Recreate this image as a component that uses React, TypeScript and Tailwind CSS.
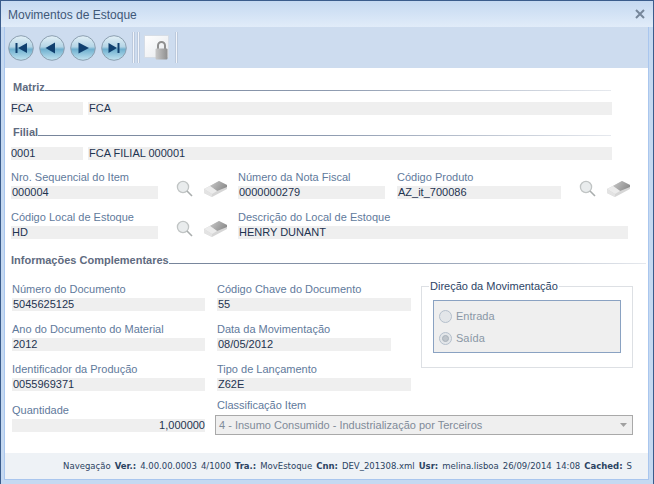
import type { ReactNode } from 'react'

function NavButton({ dir }: { dir: 'first' | 'prev' | 'next' | 'last' }) {
  const arrow = {
    first: 'M19 8 V18 L10 13 Z',
    prev: 'M16 7.5 V18.5 L6.5 13 Z',
    next: 'M8.5 7.5 V18.5 L19 13 Z',
    last: 'M7.5 8 V18 L16 13 Z',
  }[dir]
  return (
    <svg width="26" height="26" viewBox="0 0 26 26" className="shrink-0">
      <defs>
        <linearGradient id={`nav-${dir}`} x1="0" y1="0" x2="0" y2="1">
          <stop offset="0" stopColor="#e4f0f7" />
          <stop offset="0.45" stopColor="#b4d5e6" />
          <stop offset="0.55" stopColor="#6fb0cf" />
          <stop offset="1" stopColor="#c3e4f1" />
        </linearGradient>
      </defs>
      <circle cx="13" cy="13" r="12.3" fill={`url(#nav-${dir})`} stroke="#8c9fb0" strokeWidth="1" />
      <path d={arrow} fill="#10406f" />
      {dir === 'first' && <rect x="7.5" y="8" width="2" height="10" fill="#10406f" />}
      {dir === 'last' && <rect x="16.5" y="8" width="2" height="10" fill="#10406f" />}
    </svg>
  )
}

function Separator() {
  return <div className="w-[3px] h-[31px] bg-[#f2f5fa] border-x border-[#bccadd] shrink-0" />
}

function LockIcon() {
  return (
    <svg width="26" height="26" viewBox="0 0 26 26" className="shrink-0">
      <defs>
        <linearGradient id="lock-back" x1="0" y1="0" x2="1" y2="1">
          <stop offset="0" stopColor="#ffffff" />
          <stop offset="1" stopColor="#e6e9ed" />
        </linearGradient>
        <linearGradient id="lock-body" x1="0" y1="0" x2="1" y2="0">
          <stop offset="0" stopColor="#c9c9c9" />
          <stop offset="1" stopColor="#8f8f8f" />
        </linearGradient>
      </defs>
      <rect x="0.5" y="0.5" width="24" height="22" fill="url(#lock-back)" stroke="#d6dde6" />
      <path d="M14 14 V10.5 a3.5 3.5 0 0 1 7 0 V14" fill="none" stroke="#8f8f8f" strokeWidth="2" />
      <rect x="11.5" y="13.5" width="12" height="11" rx="1" fill="url(#lock-body)" />
    </svg>
  )
}

function SearchIcon() {
  return (
    <svg width="18" height="18" viewBox="0 0 18 18" className="shrink-0">
      <circle cx="7" cy="7" r="5.6" fill="#e9eced" stroke="#c0c4c4" strokeWidth="1.3" />
      <path d="M11 11 L16 16" stroke="#a9adad" strokeWidth="1.6" />
    </svg>
  )
}

function EraserIcon({ id }: { id: string }) {
  return (
    <svg width="25" height="18" viewBox="0 0 25 18" className="shrink-0">
      <defs>
        <linearGradient id={id} x1="0" y1="0" x2="1" y2="0.4">
          <stop offset="0" stopColor="#c9c9c9" />
          <stop offset="1" stopColor="#8f8f8f" />
        </linearGradient>
      </defs>
      <path d="M1 9 L16 1 L24 5 L24 9 L9 17 L1 13 Z" fill="#d6d6d6" />
      <path d="M7 6 L16 1 L24 5 L24 7 L14 11 Z" fill={`url(#${id})`} />
      <path d="M1 9 L7 6 L14 11 L9 14 Z" fill="#ececec" />
      <path d="M1 9 L9 14 L9 17 L1 13 Z" fill="#e3e3e3" />
    </svg>
  )
}

function Heading({ children }: { children: ReactNode }) {
  return (
    <div className="flex items-end h-[14px]">
      <span className="font-bold text-[#5f6b80] leading-[14px] shrink-0">{children}</span>
      <div className="flex-1 h-px mb-[3px] bg-gradient-to-r from-[#76849a] via-[#8e9bb0] to-[#e6e9ee]" />
    </div>
  )
}

function Bar({ w, right, flush, children }: { w: string; right?: boolean; flush?: boolean; children: ReactNode }) {
  return (
    <div className={`${w} h-[13px] bg-[#efefef] leading-[13px] text-[#1e3350] whitespace-nowrap shrink-0 ${right ? 'text-right' : flush ? '' : 'pl-px'}`}>
      {children}
    </div>
  )
}

function Label({ children }: { children: ReactNode }) {
  return <div className="h-[14px] leading-[14px] text-[#5f7a9c] whitespace-nowrap">{children}</div>
}

function Field({ label, value, w }: { label: string; value: string; w: string }) {
  return (
    <div className="flex flex-col gap-[2px]">
      <Label>{label}</Label>
      <Bar w={w}>{value}</Bar>
    </div>
  )
}

function Radio({ label, checked }: { label: string; checked?: boolean }) {
  return (
    <div className="flex items-center gap-[4px] h-[13px]">
      <span className="w-[13px] h-[13px] rounded-full border border-[#b5c0cc] bg-[#e3e6e9] flex items-center justify-center">
        {checked && <span className="w-[7px] h-[7px] rounded-full bg-[#bfc5cb] border border-[#a9b2bb]" />}
      </span>
      <span className="text-[#8a97a6]">{label}</span>
    </div>
  )
}

function Foot({ children }: { children: ReactNode }) {
  return <b className="font-bold">{children}</b>
}

export default function App() {
  return (
    <div className="w-[654px] h-[484px] bg-[#c5d9f1] border border-[#3a5c8c] border-b-0 flex flex-col overflow-hidden text-[11px] font-['Liberation_Sans',sans-serif]">
      {/* Title */}
      <div className="h-[26px] flex items-center justify-between pl-[7px] pr-[7px] bg-gradient-to-b from-[#c5d9f1] to-[#e1ecf9] shrink-0">
        <span className="mt-[2px] text-[12px] text-[#3f5878]">Movimentos de Estoque</span>
        <svg width="12" height="12" viewBox="0 0 12 12">
          <path d="M2 2 L10 10 M10 2 L2 10" stroke="#76869a" strokeWidth="2" />
        </svg>
      </div>

      <div className="flex-1 ml-[3px] mr-[4px] mb-[4px] flex flex-col border-x border-b border-[#a9c6ee] min-h-0">
        {/* Toolbar */}
        <div className="h-[41px] bg-[#cddcef] flex items-center pl-[3px] shrink-0">
          <div className="flex items-center gap-[5px]">
            <NavButton dir="first" />
            <NavButton dir="prev" />
            <NavButton dir="next" />
            <NavButton dir="last" />
          </div>
          <div className="flex items-center ml-[5px] gap-[2px]">
            <Separator />
            <Separator />
          </div>
          <div className="ml-[4px]">
            <LockIcon />
          </div>
          <div className="ml-[5px]">
            <Separator />
          </div>
        </div>

        {/* Body */}
        <div className="flex-1 bg-white pl-[6px] pr-[2px] pt-[12px] flex flex-col min-h-0">
          <div className="pl-[2px] pr-[35px]">
            <Heading>Matriz</Heading>
          </div>
          <div className="flex gap-[5px] mt-[8px]">
            <Bar w="w-[72px]" flush>FCA</Bar>
            <Bar w="w-[524px]">FCA</Bar>
          </div>
          <div className="pl-[2px] pr-[35px] mt-[10px]">
            <Heading>Filial</Heading>
          </div>
          <div className="flex gap-[5px] mt-[8px]">
            <Bar w="w-[72px]" flush>0001</Bar>
            <Bar w="w-[524px]">FCA FILIAL 000001</Bar>
          </div>

          <div className="flex mt-[10px]">
            <Field label="Nro. Sequencial do Item" value="000004" w="w-[147px]" />
            <div className="flex items-center gap-[9px] ml-[18px] mt-[9px]">
              <SearchIcon />
              <EraserIcon id="eraser-a" />
            </div>
            <div className="ml-[10px]">
              <Field label="Número da Nota Fiscal" value="0000000279" w="w-[147px]" />
            </div>
            <div className="ml-[12px]">
              <Field label="Código Produto" value="AZ_it_700086" w="w-[164px]" />
            </div>
            <div className="flex items-center gap-[9px] ml-[18px] mt-[9px]">
              <SearchIcon />
              <EraserIcon id="eraser-b" />
            </div>
          </div>

          <div className="flex mt-[11px]">
            <Field label="Código Local de Estoque" value="HD" w="w-[147px]" />
            <div className="flex items-center gap-[9px] ml-[18px] mt-[9px]">
              <SearchIcon />
              <EraserIcon id="eraser-c" />
            </div>
            <div className="ml-[10px]">
              <Field label="Descrição do Local de Estoque" value="HENRY DUNANT" w="w-[390px]" />
            </div>
          </div>

          <div className="mt-[14px]">
            <Heading>Informações Complementares</Heading>
          </div>

          <div className="flex mt-[15px]">
            <div className="flex flex-col gap-[11px] w-[206px] pl-px">
              <Field label="Número do Documento" value="5045625125" w="w-[193px]" />
              <Field label="Ano do Documento do Material" value="2012" w="w-[193px]" />
              <Field label="Identificador da Produção" value="0055969371" w="w-[193px]" />
            </div>
            <div className="flex flex-col gap-[11px] w-[204px]">
              <Field label="Código Chave do Documento" value="55" w="w-[194px]" />
              <Field label="Data da Movimentação" value="08/05/2012" w="w-[174px]" />
              <Field label="Tipo de Lançamento" value="Z62E" w="w-[194px]" />
            </div>
            <fieldset className="w-[212px] h-[89px] -mt-[3px] border border-[#dde0e4] px-[11px] pt-[7px]">
              <legend className="-ml-[4px] px-px text-[#2d4566] leading-[14px]">Direção da Movimentação</legend>
              <div className="w-[188px] h-[53px] bg-[#efefef] border border-[#8aa2c2] pl-[5px] pt-[9px] flex flex-col gap-[9px]">
                <Radio label="Entrada" />
                <Radio label="Saída" checked />
              </div>
            </fieldset>
          </div>

          <div className="flex mt-[7px]">
            <div className="w-[204px] pl-px pt-[5px]">
              <Label>Quantidade</Label>
              <div className="mt-[2px]">
                <Bar w="w-[193px]" right>1,000000</Bar>
              </div>
            </div>
            <div className="flex flex-col">
              <div className="pl-[2px]">
                <Label>Classificação Item</Label>
              </div>
              <div className="w-[418px] h-[20px] mt-[3px] bg-[#efefef] border border-[#a9a9a9] flex items-center justify-between pl-[3px] pr-[5px] text-[#7f8b99]">
                <span>4 - Insumo Consumido - Industrialização por Terceiros</span>
                <svg width="7" height="4" viewBox="0 0 7 4">
                  <path d="M0 0 H7 L3.5 4 Z" fill="#a0a0a0" />
                </svg>
              </div>
            </div>
          </div>
        </div>

        {/* Footer */}
        <div className="h-[26px] bg-[#eef2f6] flex items-center justify-end pr-[16px] gap-[4px] text-[8.5px] text-[#2b4362] font-['DejaVu_Sans',sans-serif] whitespace-nowrap shrink-0">
          <span>Navegação</span>
          <Foot>Ver.:</Foot>
          <span>4.00.00.0003</span>
          <span>4/1000</span>
          <Foot>Tra.:</Foot>
          <span>MovEstoque</span>
          <Foot>Cnn:</Foot>
          <span>DEV_201308.xml</span>
          <Foot>Usr:</Foot>
          <span>melina.lisboa</span>
          <span>26/09/2014</span>
          <span>14:08</span>
          <Foot>Cached:</Foot>
          <span>S</span>
        </div>
      </div>
    </div>
  )
}
